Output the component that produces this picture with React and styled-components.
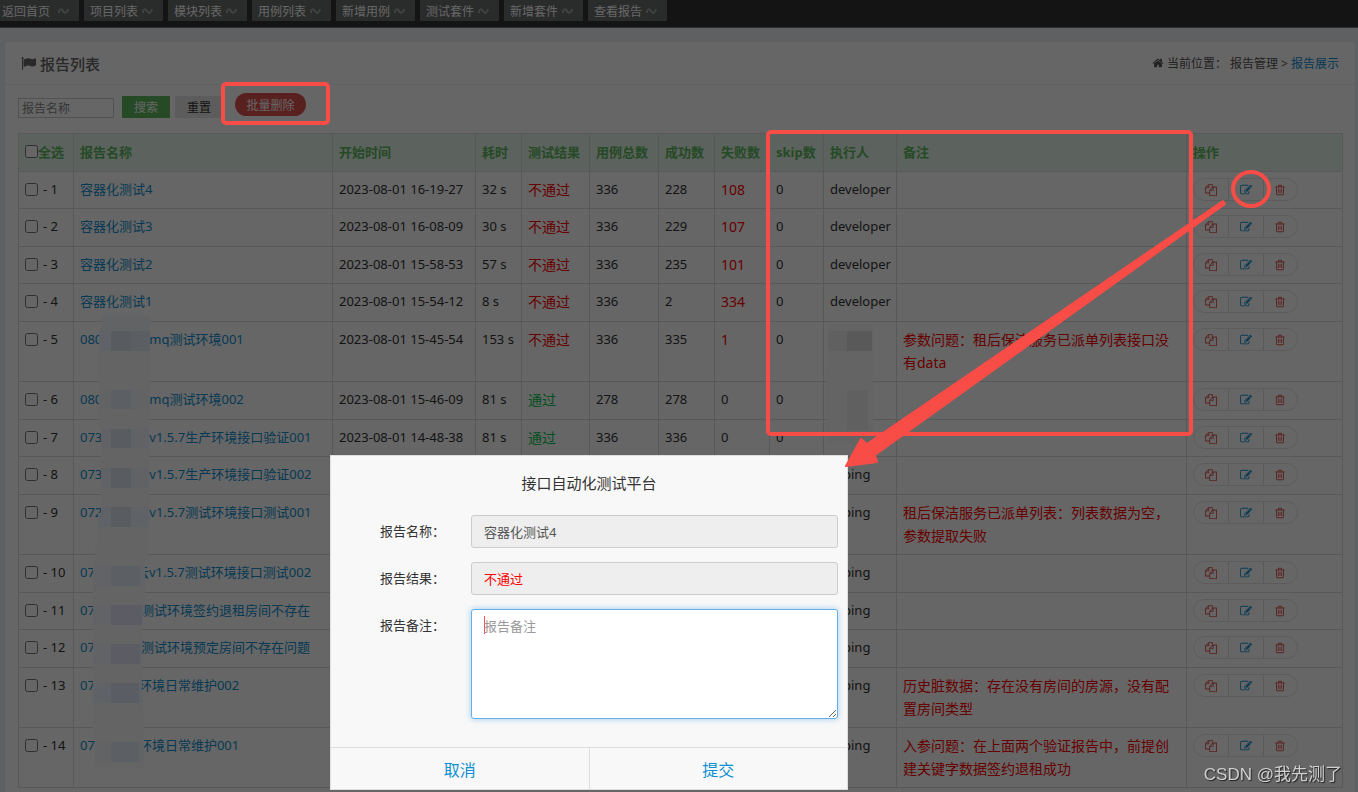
import React, {useState} from 'react';
import styled, {createGlobalStyle} from 'styled-components';

const tabs = ['返回首页', '项目列表', '模块列表', '用例列表', '新增用例', '测试套件', '新增套件', '查看报告']

const columns = [
    {title: '报告名称', width: 259},
    {title: '开始时间', width: 143},
    {title: '耗时', width: 46},
    {title: '测试结果', width: 68},
    {title: '用例总数', width: 69},
    {title: '成功数', width: 56},
    {title: '失败数', width: 55},
    {title: 'skip数', width: 54},
    {title: '执行人', width: 73},
    {title: '备注'},
    {title: '操作', width: 156},
]

// name: [visible start, hidden width, visible end]
const reports = [
    {id: 1, name: ['容器化测试4'], time: '2023-08-01 16-19-27', cost: '32 s', pass: false, total: 336, ok: 228, fail: 108, skip: 0, user: 'developer'},
    {id: 2, name: ['容器化测试3'], time: '2023-08-01 16-08-09', cost: '30 s', pass: false, total: 336, ok: 229, fail: 107, skip: 0, user: 'developer'},
    {id: 3, name: ['容器化测试2'], time: '2023-08-01 15-58-53', cost: '57 s', pass: false, total: 336, ok: 235, fail: 101, skip: 0, user: 'developer'},
    {id: 4, name: ['容器化测试1'], time: '2023-08-01 15-54-12', cost: '8 s', pass: false, total: 336, ok: 2, fail: 334, skip: 0, user: 'developer'},
    {id: 5, name: ['080', 47, 'mq测试环境001'], time: '2023-08-01 15-45-54', cost: '153 s', pass: false, total: 336, ok: 335, fail: 1, skip: 0, note: '参数问题：租后保洁服务已派单列表接口没有data'},
    {id: 6, name: ['080', 47, 'mq测试环境002'], time: '2023-08-01 15-46-09', cost: '81 s', pass: true, total: 278, ok: 278, fail: 0, skip: 0},
    {id: 7, name: ['073', 47, 'v1.5.7生产环境接口验证001'], time: '2023-08-01 14-48-38', cost: '81 s', pass: true, total: 336, ok: 336, fail: 0, skip: 0},
    {id: 8, name: ['073', 47, 'v1.5.7生产环境接口验证002'], user: 'ping'},
    {id: 9, name: ['072', 47, 'v1.5.7测试环境接口测试001'], user: 'ping', note: '租后保洁服务已派单列表：列表数据为空，参数提取失败'},
    {id: 10, name: ['07', 41, '云v1.5.7测试环境接口测试002'], user: 'ping'},
    {id: 11, name: ['07', 46, '测试环境签约退租房间不存在'], user: 'ping'},
    {id: 12, name: ['07', 46, '测试环境预定房间不存在问题'], user: 'ping'},
    {id: 13, name: ['07', 44, '环境日常维护002'], user: 'ping', note: '历史脏数据：存在没有房间的房源，没有配置房间类型'},
    {id: 14, name: ['07', 44, '环境日常维护001'], user: 'ping', note: '入参问题：在上面两个验证报告中，前提创建关键字数据签约退租成功'},
]

const icons = {
    flag: 'M320 256q0 72-64 110v1266q0 13-9.5 22.5t-22.5 9.5h-64q-13 0-22.5-9.5t-9.5-22.5v-1266q-64-38-64-110 0-53 37.5-90.5t90.5-37.5 90.5 37.5 37.5 90.5zm1472 64v763q0 25-12.5 38.5t-39.5 27.5q-215 116-369 116-61 0-123.5-22t-108.5-48-115.5-48-142.5-22q-192 0-464 146-17 9-33 9-26 0-45-19t-19-45v-742q0-32 31-55 21-14 79-43 236-120 421-120 107 0 200 29t219 88q38 19 88 19 54 0 117.5-21t110-47 88-47 54.5-21q26 0 45 19t19 45z',
    home: 'M1472 992v480q0 26-19 45t-45 19h-384v-384h-256v384h-384q-26 0-45-19t-19-45v-480q0-1 .5-3t.5-3l575-474 575 474q1 2 1 6zm223-69l-62 74q-8 9-21 11h-3q-13 0-21-7l-692-577-692 577q-12 8-24 7-13-2-21-11l-62-74q-8-10-7-23.5t11-21.5l719-599q32-26 76-26t76 26l244 204v-195q0-14 9-23t23-9h192q14 0 23 9t9 23v408l219 182q10 8 11 21.5t-7 23.5z',
    copy: 'M1696 384q40 0 68 28t28 68v1216q0 40-28 68t-68 28h-960q-40 0-68-28t-28-68v-288h-544q-40 0-68-28t-28-68v-672q0-40 20-88t48-76l408-408q28-28 76-48t88-20h416q40 0 68 28t28 68v328q68-40 128-40h416zm-544 213l-299 299h299v-299zm-640-384l-299 299h299v-299zm196 647l316-316v-416h-384v416q0 40-28 68t-68 28h-416v640h512v-256q0-40 20-88t48-76zm956 804v-1152h-384v416q0 40-28 68t-68 28h-416v640h896z',
    edit: 'M888 1184l116-116-152-152-116 116v56h96v96h56zm440-720q-16-16-33 1l-350 350q-17 17-1 33t33-1l350-350q17-17 1-33zm80 594v190q0 119-84.5 203.5t-203.5 84.5h-832q-119 0-203.5-84.5t-84.5-203.5v-832q0-119 84.5-203.5t203.5-84.5h832q63 0 117 25 15 7 18 23 3 17-9 29l-49 49q-14 14-32 8-23-6-45-6h-832q-66 0-113 47t-47 113v832q0 66 47 113t113 47h832q66 0 113-47t47-113v-126q0-13 9-22l64-64q15-15 35-7t20 29zm-96-738l288 288-672 672h-288v-288zm444 132l-92 92-288-288 92-92q28-28 68-28t68 28l152 152q28 28 28 68t-28 68z',
    trash: 'M704 736v576q0 14-9 23t-23 9h-64q-14 0-23-9t-9-23v-576q0-14 9-23t23-9h64q14 0 23 9t9 23zm256 0v576q0 14-9 23t-23 9h-64q-14 0-23-9t-9-23v-576q0-14 9-23t23-9h64q14 0 23 9t9 23zm256 0v576q0 14-9 23t-23 9h-64q-14 0-23-9t-9-23v-576q0-14 9-23t23-9h64q14 0 23 9t9 23zm128 724v-948h-896v948q0 22 7 40.5t14.5 27 10.5 8.5h832q3 0 10.5-8.5t14.5-27 7-40.5zm-672-1076h448l-48-117q-7-9-17-11h-317q-10 2-17 11zm928 32v64q0 14-9 23t-23 9h-96v948q0 83-47 143.5t-113 60.5h-832q-66 0-113-58.5t-47-141.5v-952h-96q-14 0-23-9t-9-23v-64q0-14 9-23t23-9h309l70-167q15-37 54-63t79-26h320q40 0 79 26t54 63l70 167h309q14 0 23 9t9 23z',
}

const Icon = ({name, size}) => (
    <svg width={size} height={size} viewBox="0 0 1792 1792" fill="currentColor" aria-hidden="true">
        <path d={icons[name]} />
    </svg>
)

const ReportRow = ({report, checked, onCheck}) => {
    const {id, name, time, cost, pass, total, ok, fail, skip, user, note} = report

  return (
    <tr>
        <Td>
            <CheckLabel>
                <Check type="checkbox" checked={checked} onChange={onCheck} />
                <span>- {id}</span>
            </CheckLabel>
        </Td>
        <Td>
            <NameLink href="#report">{name[0]}{name[1] && <Hidden $width={name[1]} />}{name[2]}</NameLink>
        </Td>
        <Td $nowrap>{time}</Td>
        <Td $nowrap>{cost}</Td>
        <Td>{pass !== undefined && <Result $pass={pass}>{pass ? '通过' : '不通过'}</Result>}</Td>
        <Td>{total}</Td>
        <Td>{ok}</Td>
        <Td>{fail > 0 ? <Result>{fail}</Result> : fail}</Td>
        <Td>{skip}</Td>
        <Td $nowrap>{user === 'ping' && <Hidden $width={13} />}{user}</Td>
        <Td>{note && <Result>{note}</Result>}</Td>
        <Td>
            <Actions>
                <Action $danger aria-label="复制"><Icon name="copy" size={12} /></Action>
                <Action aria-label="编辑"><Icon name="edit" size={12} /></Action>
                <Action $danger aria-label="删除"><Icon name="trash" size={12} /></Action>
            </Actions>
        </Td>
    </tr>
  )
}

const EditModal = () => {

    const [remark, setRemark] = useState('')

  return (
    <Modal role="dialog" aria-labelledby="modal-title">
        <ModalTitle id="modal-title">接口自动化测试平台</ModalTitle>
        <ModalForm>
            <label htmlFor="name">报告名称：</label>
            <Field id="name" value="容器化测试4" readOnly />
            <label htmlFor="result">报告结果：</label>
            <Field id="result" value="不通过" readOnly $red />
            <label htmlFor="remark">报告备注：</label>
            <Remark id="remark" placeholder="报告备注" value={remark} onChange={(e)=>{setRemark(e.target.value)}} />
        </ModalForm>
        <ModalFooter>
            <ModalButton>取消</ModalButton>
            <ModalButton>提交</ModalButton>
        </ModalFooter>
    </Modal>
  )
}

const Mosaic = () => (
    <Canvas aria-hidden="true">
        <path d="M102 315H150V395H149V515H148V560H145V605L142 625V690L144 720V768H95V740H93V560H95V545H98V513H101V428H99V328H102z" fill="#646464" />
        <g fill="#5f6266">
            <path d="M102 316h48v15h-48z" opacity=".5" />
            <path d="M99 331h51v20H99z" />
            <path d="M99 390h50v19H99z" opacity=".6" />
            <path d="M101 429h48v19h-48zM101 468h48v20h-48z" opacity=".8" />
            <path d="M101 507h48v20h-51v-13h3z" />
            <path d="M95 566h50v20H93v-15h2zM93 605h51l-2 20H93zM93 644h48v20H93z" opacity=".7" />
            <path d="M93 683h48l2 20H93z" />
            <path d="M95 742h49v20H95z" opacity=".6" />
        </g>
        <g fill="#585c61">
            <path d="M111 331h20v20h-20z" />
            <path d="M131 331h19v20h-19zM111 390h20v19h-20z" opacity=".5" />
            <path d="M111 429h20v19h-20zM111 468h20v20h-20zM111 507h20v20h-20z" opacity=".8" />
            <path d="M111 566h29v20h-29zM111 742h28v20h-28z" opacity=".5" />
        </g>
        <path d="M111 605h31v20h-31zM111 644h29v20h-29zM111 683h28v20h-28z" fill="#5a5b64" opacity=".7" />
        <path d="M828 323h45v122h-46v-72l1-20z" fill="#646464" />
        <path d="M828 331h19v20h-19zM847 390h21v40h-21z" fill="#606060" />
        <path d="M847 331h25v20h-25z" fill="#595959" />
    </Canvas>
)

const Marks = () => (
    <Canvas aria-hidden="true" fill="none" stroke="#f84c47">
        <rect x="223" y="84" width="105" height="39" rx="3" strokeWidth="4" />
        <rect x="768" y="132" width="423" height="302" rx="3" strokeWidth="4" />
        <ellipse cx="1251" cy="189" rx="18" ry="17" strokeWidth="4" />
        <path d="M1223 201l2 3-350 251 2 7-31 4 15-27 6 5z" fill="#f84c47" strokeWidth="2" strokeLinejoin="round" />
    </Canvas>
)

const App = () => {

    const [selected, setSelected] = useState([])

    const toggle = (id) => {
        setSelected(selected.includes(id) ? selected.filter((s) => s !== id) : [...selected, id])
    }

    const toggleAll = () => {
        setSelected(selected.length === reports.length ? [] : reports.map((r) => r.id))
    }

  return (
    <Page>
        <GlobalStyle />
        <TopBar>
            {tabs.map((tab) => (
                <Tab key={tab}>
                    {tab}
                    <svg width="11" height="6" viewBox="0 0 11 6" fill="none" stroke="#a3a3a3" strokeWidth="2" aria-hidden="true">
                        <path d="M1 5C1 0 4 1 5 3S9 6 10 1" />
                    </svg>
                </Tab>
            ))}
        </TopBar>
        <Panel>
            <PanelHead>
                <PanelTitle><Icon name="flag" size={15} />报告列表</PanelTitle>
                <Crumbs>
                    <Icon name="home" size={12} />
                    <span>当前位置：</span>
                    <span>报告管理</span>
                    <span>&gt;</span>
                    <a href="#reports">报告展示</a>
                </Crumbs>
            </PanelHead>
            <PanelBody>
                <Toolbar>
                    <Search placeholder="报告名称" aria-label="报告名称" />
                    <Button $bg="#5eb95e" $color="#fff">搜索</Button>
                    <Button $bg="#e6e6e6" $color="#333">重置</Button>
                    <DeleteButton>批量删除</DeleteButton>
                </Toolbar>
                <Table>
                    <colgroup>
                        <col width={55} />
                        {columns.map((c) => <col key={c.title} width={c.width} />)}
                    </colgroup>
                    <thead>
                        <tr>
                            <Th>
                                <CheckLabel $all>
                                    <Check type="checkbox" checked={selected.length === reports.length} onChange={toggleAll} />
                                    <span>全选</span>
                                </CheckLabel>
                            </Th>
                            {columns.map((c) => <Th key={c.title}>{c.title}</Th>)}
                        </tr>
                    </thead>
                    <tbody>
                        {reports.map((r) => (
                            <ReportRow key={r.id} report={r} checked={selected.includes(r.id)} onCheck={()=>{toggle(r.id)}} />
                        ))}
                    </tbody>
                </Table>
            </PanelBody>
        </Panel>
        <Dimmer />
        <Mosaic />
        <EditModal />
        <Marks />
        <Watermark>CSDN @我先测了</Watermark>
    </Page>
  )
}

export default App;

const GlobalStyle = createGlobalStyle`
    * {
        box-sizing: border-box;
    }
    body {
        margin: 0;
        color: #333;
        font-family: "Noto Sans", "Noto Sans CJK SC", sans-serif;
        font-size: 13px;
    }
    input, button, textarea {
        font-family: inherit;
    }
    a {
        color: #0e90d2;
        text-decoration: none;
    }
`
const Page = styled.div`
    height: 100vh;
    overflow: hidden;
    background-color: #eef0f4;
`
const TopBar = styled.nav`
    display: flex;
    gap: 5px;
    height: 28px;
    padding-bottom: 6px;
    background-color: #343434;
    border-bottom: 1px solid #707378;
`
const Tab = styled.button`
    display: flex;
    justify-content: space-between;
    align-items: center;
    width: 79px;
    height: 21px;
    padding: 0 10px 0 6px;
    border: none;
    background-color: #6a6b6d;
    color: #fff;
    font-size: 12px;
    white-space: nowrap;
    cursor: pointer;

    &:first-child {
        padding-left: 2px;
    }
`
const Panel = styled.main`
    margin: 14px 3px 0 5px;
    border-radius: 4px;
    background-color: #fff;
`
const PanelHead = styled.header`
    display: flex;
    justify-content: space-between;
    align-items: center;
    height: 43px;
    padding: 0 16px;
    border-bottom: 1px solid #eef1f5;
`
const PanelTitle = styled.h1`
    display: flex;
    align-items: center;
    gap: 4px;
    margin: 0;
    color: #666;
    font-size: 15px;
    font-weight: 500;
`
const Crumbs = styled.div`
    display: flex;
    align-items: center;
    gap: 3px;
    color: #555;
    font-size: 12px;
`
const PanelBody = styled.div`
    padding: 8px 12px 12px 13px;
`
const Toolbar = styled.div`
    display: flex;
    align-items: flex-end;
    height: 25px;
    margin-bottom: 15px;
`
const Search = styled.input`
    width: 96px;
    height: 20px;
    margin-right: 8px;
    padding: 0 3px;
    border: 1px solid #ccc;
    background-color: #fff;
    font-size: 12px;

    &::placeholder {
        color: #888;
    }
`
const Button = styled.button`
    width: 48px;
    height: 22px;
    margin-right: 5px;
    padding: 0;
    border: none;
    background-color: ${(props) => props.$bg};
    color: ${(props) => props.$color};
    font-size: 12px;
    cursor: pointer;
`
const DeleteButton = styled.button`
    align-self: flex-start;
    width: 71px;
    height: 23px;
    margin-left: 7px;
    padding: 0;
    border: none;
    border-radius: 12px;
    background-color: #dd514c;
    color: #fff;
    font-size: 12px;
    cursor: pointer;
`
const Table = styled.table`
    width: 100%;
    table-layout: fixed;
    border-collapse: collapse;

    tbody tr {
        height: 37px;
    }
    tbody tr:nth-child(even) {
        height: 38px;
    }
`
const Th = styled.th`
    height: 38px;
    padding: 0 6px 2px;
    border: 1px solid #ddd;
    background-color: #e5f5ea;
    color: #5eb95e;
    text-align: left;
    white-space: nowrap;
`
const Td = styled.td`
    padding: 6px 6px 7px;
    border: 1px solid #ddd;
    line-height: 23px;
    vertical-align: top;
    white-space: ${(props) => props.$nowrap ? "nowrap" : "normal"};
`
const CheckLabel = styled.label`
    display: flex;
    align-items: center;
    gap: ${(props) => props.$all ? "0" : "5px"};
    white-space: nowrap;
`
const Check = styled.input`
    width: 13px;
    height: 13px;
    margin: 0;
`
const NameLink = styled.a`
    white-space: nowrap;
`
const Hidden = styled.span`
    display: inline-block;
    width: ${(props) => props.$width}px;
`
const Result = styled.div`
    color: ${(props) => props.$pass ? "#00c853" : "#ff0000"};
    font-size: 14px;
`
const Actions = styled.div`
    display: flex;
    width: 105px;
    height: 23px;
    border: 1px solid #e6e6e6;
    border-radius: 12px;
    overflow: hidden;
`
const Action = styled.button`
    display: flex;
    justify-content: center;
    align-items: center;
    width: 35px;
    padding: 0;
    border: none;
    background-color: transparent;
    color: ${(props) => props.$danger ? "#dd514c" : "#0e90d2"};
    cursor: pointer;

    & + & {
        border-left: 1px solid #e0e0e0;
    }
`
const Dimmer = styled.div`
    position: fixed;
    inset: 0;
    background-color: rgba(0, 0, 0, 0.6);
`
const Canvas = styled.svg`
    position: fixed;
    top: 0;
    left: 0;
    width: 100%;
    height: 100%;
    pointer-events: none;
`
const Modal = styled.div`
    position: fixed;
    left: 330px;
    bottom: 2px;
    width: 518px;
    border: 1px solid #dedede;
    background-color: #f8f8f8;
`
const ModalTitle = styled.h2`
    margin: 0;
    padding-top: 15px;
    font-size: 15px;
    font-weight: 400;
    line-height: 24px;
    text-align: center;
`
const ModalForm = styled.form`
    display: grid;
    grid-template-columns: 91px 1fr;
    row-gap: 14px;
    padding: 20px 9px 28px 49px;

    > label {
        line-height: 32px;
    }
`
const Field = styled.input`
    height: 33px;
    padding: 0 12px;
    border: 1px solid #ccc;
    border-radius: 3px;
    background-color: #eee;
    color: ${(props) => props.$red ? "#ff0000" : "#555"};
    font-size: 13px;
    outline: none;
`
const Remark = styled.textarea`
    height: 110px;
    padding: 6px 12px;
    border: 1px solid #66afe9;
    border-radius: 3px;
    background-color: #fff;
    box-shadow: 0 0 6px rgba(102, 175, 233, 0.6);
    caret-color: #ff0000;
    font-size: 13px;
    outline: none;

    &::placeholder {
        color: #999;
    }
    &:placeholder-shown:not(:focus) {
        background: #fff linear-gradient(#ff4d4d, #ff4d4d) 12px 6px / 1px 18px no-repeat;
    }
`
const ModalFooter = styled.div`
    display: flex;
    border-top: 1px solid #dedede;
`
const ModalButton = styled.button`
    flex: 1;
    height: 41px;
    border: none;
    background-color: transparent;
    color: #0e90d2;
    font-size: 16px;
    cursor: pointer;

    & + & {
        border-left: 1px solid #dedede;
    }
`
const Watermark = styled.div`
    position: fixed;
    right: 16px;
    bottom: 7px;
    color: #d0d0d0;
    font-family: "Liberation Sans", "Noto Sans CJK SC", sans-serif;
    font-size: 17px;
    text-shadow: 1px 1px 1px #222;
`
